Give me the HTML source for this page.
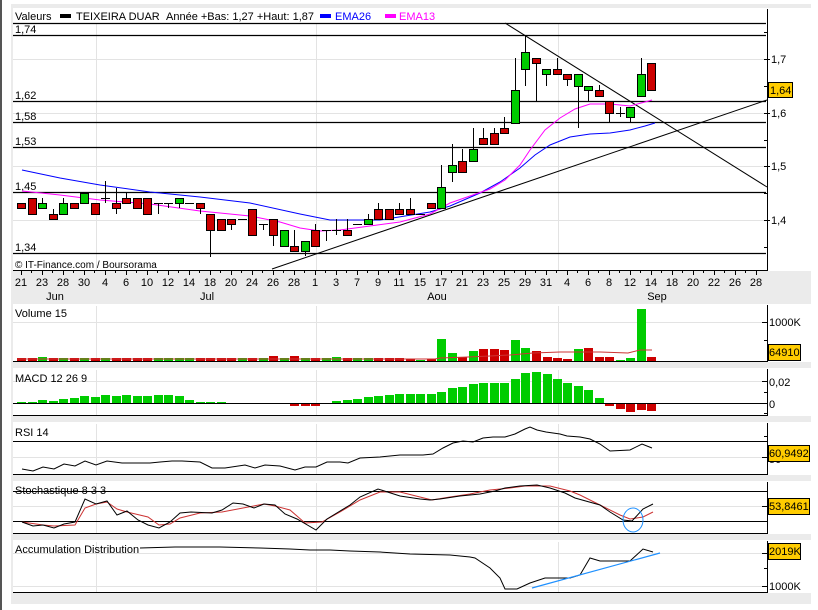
<!DOCTYPE html>
<html><head><meta charset="utf-8"><style>
html,body{margin:0;padding:0;background:#fff;width:818px;height:610px;overflow:hidden}
svg{display:block}
text{font-family:"Liberation Sans",sans-serif;font-size:11px;fill:#000}
</style></head><body>
<svg width="818" height="610" xmlns="http://www.w3.org/2000/svg">
<rect x="0" y="0" width="2" height="610" fill="#555"/>
<rect x="11" y="4" width="800" height="600" fill="#ebebeb"/>
<!-- panels white -->
<rect x="13" y="8" width="798" height="263" fill="#fff"/>
<rect x="13" y="304" width="798" height="58" fill="#fff"/>
<rect x="13" y="368" width="798" height="48" fill="#fff"/>
<rect x="13" y="422" width="798" height="53" fill="#fff"/>
<rect x="13" y="481" width="798" height="53" fill="#fff"/>
<rect x="13" y="540" width="798" height="53" fill="#fff"/>
<!-- light grid -->
<g stroke="#e3e3e3" stroke-width="1">
<line x1="13" y1="59.5" x2="767" y2="59.5"/><line x1="13" y1="113.5" x2="767" y2="113.5"/>
<line x1="13" y1="166.5" x2="767" y2="166.5"/><line x1="13" y1="220.5" x2="767" y2="220.5"/>
<line x1="13" y1="322.5" x2="767" y2="322.5"/><line x1="13" y1="381.5" x2="767" y2="381.5"/>
<line x1="13" y1="457.5" x2="767" y2="457.5"/><line x1="13" y1="506.5" x2="767" y2="506.5"/>
<line x1="13" y1="553.5" x2="767" y2="553.5"/><line x1="13" y1="586.5" x2="767" y2="586.5"/>
<path d="M96.5 24V271M316.5 24V271M558.5 24V271M96.5 306V362M316.5 306V362M558.5 306V362M96.5 370V416M316.5 370V416M558.5 370V416M96.5 424V475M316.5 424V475M558.5 424V475M96.5 483V534M316.5 483V534M558.5 483V534M96.5 542V593M316.5 542V593M558.5 542V593"/>
</g>
<!-- title -->
<text x="15" y="20">Valeurs</text>
<rect x="60" y="14" width="11" height="4" fill="#000"/>
<text x="76" y="20">TEIXEIRA DUAR</text>
<text x="166" y="20">Année +Bas: 1,27 +Haut: 1,87</text>
<rect x="320" y="14" width="11" height="4" fill="#00f"/>
<text x="335" y="20" style="fill:#00f">EMA26</text>
<rect x="385" y="14" width="11" height="4" fill="#f0f"/>
<text x="399" y="20" style="fill:#f0f">EMA13</text>
<!-- horizontal levels -->
<g stroke="#000" stroke-width="1.2">
<line x1="13" y1="23.5" x2="766" y2="23.5"/>
<line x1="13" y1="35.5" x2="766" y2="35.5"/>
<line x1="13" y1="101.5" x2="766" y2="101.5"/>
<line x1="13" y1="122.5" x2="766" y2="122.5"/>
<line x1="13" y1="147.5" x2="766" y2="147.5"/>
<line x1="13" y1="192.5" x2="766" y2="192.5"/>
<line x1="13" y1="253.5" x2="766" y2="253.5"/>
</g>
<text x="15" y="33">1,74</text><text x="15" y="99">1,62</text><text x="15" y="120">1,58</text>
<text x="15" y="145">1,53</text><text x="15" y="190">1,45</text><text x="15" y="251">1,34</text>
<text x="15" y="268" style="font-size:10px">© IT-Finance.com / Boursorama</text>
<!-- trend lines -->
<line x1="505" y1="23" x2="767" y2="187" stroke="#000" stroke-width="1"/>
<line x1="272" y1="269" x2="767" y2="100" stroke="#000" stroke-width="1"/>
<!-- EMAs -->
<polyline fill="none" stroke="#00f" stroke-width="1" points="22,170 60,178 100,185 150,192 200,197 250,203 300,214 330,220 380,220 430,212 450,206 480,193 500,182 520,168 535,155 550,145 570,137 590,134 610,133 630,130 645,126 655,123"/>
<polyline fill="none" stroke="#f0f" stroke-width="1" points="22,191 60,195 100,200 150,204 200,211 230,214 250,216 280,222 300,228 320,231 340,230 370,226 400,222 430,214 450,203 470,196 490,189 505,180 520,165 530,150 545,130 560,118 575,109 590,104 610,104 630,106 645,102 652,100"/>
<!-- candles -->
<g stroke="#000" stroke-width="1">
<path d="M42.5 198V208M53.5 209V219M63.5 198V214M105.5 181V203M116.5 188V214M126.5 193V203M158.5 203V214M168.5 203V208M179.5 198V208M200.5 203V214M210.5 214V257M231.5 219V230M263.5 224V230M273.5 219V246M294.5 230V251M305.5 241V256M315.5 224V246M326.5 230V241M336.5 219V235M347.5 219V235M368.5 214V224M378.5 203V219M399.5 203V214M410.5 198V214M441.5 165V208M452.5 144V182M462.5 149V172M473.5 128V161M483.5 128V144M494.5 128V144M504.5 117V133M515.5 58V123M525.5 36V86M536.5 58V101M546.5 69V86M557.5 58V74M567.5 74V86M578.5 74V128M588.5 86V101M599.5 85V96M609.5 101V123M620.5 107V117M630.5 107V123M641.5 58V96"/>
<path d="M101 198.5H110M154 203.5H163M164 203.5H173M185 203.5H194M238 219.5H247M259 224.5H268M322 230.5H331M332 230.5H341M353 224.5H362M416 214.5H425M616 113.5H625"/>
</g>
<g stroke="#000" stroke-width="1" fill="#cc0000">
<rect x="17.5" y="203.5" width="8" height="5"/><rect x="28.5" y="198.5" width="8" height="16"/>
<rect x="49.5" y="214.5" width="8" height="5"/><rect x="70.5" y="203.5" width="8" height="5"/>
<rect x="91.5" y="203.5" width="8" height="11"/><rect x="112.5" y="203.5" width="8" height="5"/>
<rect x="122.5" y="198.5" width="8" height="5"/><rect x="133.5" y="198.5" width="8" height="10"/>
<rect x="143.5" y="198.5" width="8" height="16"/><rect x="196.5" y="203.5" width="8" height="5"/>
<rect x="206.5" y="214.5" width="8" height="16"/><rect x="217.5" y="219.5" width="8" height="11"/>
<rect x="227.5" y="219.5" width="8" height="5"/><rect x="248.5" y="209.5" width="8" height="26"/>
<rect x="269.5" y="219.5" width="8" height="16"/><rect x="290.5" y="246.5" width="8" height="5"/>
<rect x="311.5" y="230.5" width="8" height="16"/><rect x="343.5" y="230.5" width="8" height="5"/>
<rect x="374.5" y="209.5" width="8" height="10"/><rect x="385.5" y="209.5" width="8" height="10"/>
<rect x="395.5" y="209.5" width="8" height="5"/><rect x="406.5" y="209.5" width="8" height="5"/>
<rect x="427.5" y="203.5" width="8" height="5"/><rect x="458.5" y="161.5" width="8" height="11"/>
<rect x="479.5" y="138.5" width="8" height="6"/><rect x="490.5" y="133.5" width="8" height="11"/>
<rect x="500.5" y="128.5" width="8" height="5"/><rect x="532.5" y="58.5" width="8" height="5"/>
<rect x="553.5" y="69.5" width="8" height="5"/><rect x="563.5" y="74.5" width="8" height="5"/>
<rect x="595.5" y="90.5" width="8" height="6"/><rect x="605.5" y="101.5" width="8" height="12"/>
<rect x="647.5" y="63.5" width="8" height="27"/>
</g>
<g stroke="#000" stroke-width="1" fill="#00cc00">
<rect x="38.5" y="203.5" width="8" height="5"/><rect x="59.5" y="203.5" width="8" height="11"/>
<rect x="80.5" y="193.5" width="8" height="10"/><rect x="175.5" y="198.5" width="8" height="5"/>
<rect x="280.5" y="230.5" width="8" height="16"/><rect x="301.5" y="241.5" width="8" height="10"/>
<rect x="364.5" y="219.5" width="8" height="5"/><rect x="437.5" y="187.5" width="8" height="21"/>
<rect x="448.5" y="165.5" width="8" height="7"/><rect x="469.5" y="149.5" width="8" height="12"/>
<rect x="511.5" y="90.5" width="8" height="33"/><rect x="521.5" y="52.5" width="8" height="17"/>
<rect x="542.5" y="69.5" width="8" height="5"/><rect x="574.5" y="74.5" width="8" height="12"/>
<rect x="584.5" y="86.5" width="8" height="4"/><rect x="626.5" y="107.5" width="8" height="10"/>
<rect x="637.5" y="74.5" width="8" height="22"/>
</g>
<!-- main axis -->
<line x1="767.5" y1="9" x2="767.5" y2="271" stroke="#000"/>
<line x1="13" y1="270.5" x2="767" y2="270.5" stroke="#000"/>
<g stroke="#000"><path d="M764 32.5H768M764 59.5H770M764 86.5H768M764 113.5H770M764 140.5H768M764 166.5H770M764 193.5H768M764 220.5H770M764 247.5H768"/></g>
<text x="771" y="63">1,7</text><text x="771" y="117">1,6</text><text x="771" y="170">1,5</text><text x="771" y="224">1,4</text>
<rect x="768.5" y="82.5" width="24" height="15" fill="#ffcc00" stroke="#000"/>
<text x="770" y="94">1,64</text>
<!-- date axis -->
<path stroke="#000" d="M21.5 271V275M31.5 271V273M42.5 271V275M52.5 271V273M63.5 271V275M73.5 271V273M84.5 271V275M94.5 271V273M105.5 271V275M115.5 271V273M126.5 271V275M136.5 271V273M147.5 271V275M157.5 271V273M168.5 271V275M178.5 271V273M189.5 271V275M199.5 271V273M210.5 271V275M220.5 271V273M231.5 271V275M241.5 271V273M252.5 271V275M262.5 271V273M273.5 271V275M283.5 271V273M294.5 271V275M304.5 271V273M315.5 271V275M325.5 271V273M336.5 271V275M346.5 271V273M357.5 271V275M367.5 271V273M378.5 271V275M388.5 271V273M399.5 271V275M409.5 271V273M420.5 271V275M430.5 271V273M441.5 271V275M451.5 271V273M462.5 271V275M472.5 271V273M483.5 271V275M493.5 271V273M504.5 271V275M514.5 271V273M525.5 271V275M535.5 271V273M546.5 271V275M556.5 271V273M567.5 271V275M577.5 271V273M588.5 271V275M598.5 271V273M609.5 271V275M619.5 271V273M630.5 271V275M640.5 271V273M651.5 271V275M661.5 271V273M672.5 271V275M682.5 271V273M693.5 271V275M703.5 271V273M714.5 271V275M724.5 271V273M735.5 271V275M745.5 271V273M756.5 271V275"/>
<g text-anchor="middle">
<text x="21" y="286">21</text><text x="42" y="286">23</text><text x="63" y="286">28</text><text x="84" y="286">30</text>
<text x="105" y="286">4</text><text x="126" y="286">6</text><text x="147" y="286">10</text><text x="168" y="286">12</text>
<text x="189" y="286">14</text><text x="210" y="286">18</text><text x="231" y="286">20</text><text x="252" y="286">24</text>
<text x="273" y="286">26</text><text x="294" y="286">28</text><text x="315" y="286">1</text><text x="336" y="286">3</text>
<text x="357" y="286">7</text><text x="378" y="286">9</text><text x="399" y="286">11</text><text x="420" y="286">15</text>
<text x="441" y="286">17</text><text x="462" y="286">21</text><text x="483" y="286">23</text><text x="504" y="286">25</text>
<text x="525" y="286">29</text><text x="546" y="286">31</text><text x="567" y="286">4</text><text x="588" y="286">6</text>
<text x="609" y="286">8</text><text x="630" y="286">12</text><text x="651" y="286">14</text><text x="672" y="286">18</text>
<text x="693" y="286">20</text><text x="714" y="286">22</text><text x="735" y="286">26</text><text x="756" y="286">28</text>
<text x="55" y="300">Jun</text><text x="207" y="300">Jul</text><text x="437" y="300">Aou</text><text x="657" y="300">Sep</text>
</g>
<!-- VOLUME -->
<text x="15" y="317">Volume 15</text>
<g fill="#cc0000">
<rect x="17" y="358" width="9" height="4"/><rect x="28" y="358" width="9" height="4"/><rect x="49" y="358" width="9" height="4"/><rect x="70" y="358" width="9" height="4"/><rect x="91" y="358" width="9" height="4"/><rect x="112" y="358" width="9" height="4"/><rect x="122" y="358" width="9" height="4"/><rect x="133" y="358" width="9" height="4"/><rect x="143" y="358" width="9" height="4"/><rect x="196" y="358" width="9" height="4"/><rect x="206" y="358" width="9" height="4"/><rect x="217" y="358" width="9" height="4"/><rect x="227" y="358" width="9" height="4"/><rect x="248" y="358" width="9" height="4"/><rect x="269" y="356" width="9" height="6"/><rect x="290" y="356" width="9" height="6"/><rect x="311" y="358" width="9" height="4"/><rect x="343" y="358" width="9" height="4"/><rect x="374" y="358" width="9" height="4"/><rect x="385" y="358" width="9" height="4"/><rect x="395" y="358" width="9" height="4"/><rect x="406" y="359" width="9" height="3"/><rect x="427" y="359" width="9" height="3"/><rect x="458" y="357" width="9" height="5"/><rect x="479" y="349" width="9" height="13"/><rect x="490" y="349" width="9" height="13"/><rect x="500" y="350" width="9" height="12"/><rect x="532" y="351" width="9" height="11"/><rect x="543" y="357" width="9" height="5"/><rect x="553" y="358" width="9" height="4"/><rect x="563" y="359" width="9" height="3"/><rect x="584" y="348" width="9" height="14"/><rect x="595" y="357" width="9" height="5"/><rect x="605" y="357" width="9" height="5"/><rect x="647" y="357" width="9" height="5"/>
</g>
<g fill="#00cc00">
<rect x="38" y="357" width="9" height="5"/><rect x="59" y="358" width="9" height="4"/><rect x="80" y="358" width="9" height="4"/><rect x="101" y="358" width="9" height="4"/><rect x="154" y="358" width="9" height="4"/><rect x="164" y="358" width="9" height="4"/><rect x="175" y="358" width="9" height="4"/><rect x="185" y="358" width="9" height="4"/><rect x="238" y="358" width="9" height="4"/><rect x="259" y="358" width="9" height="4"/><rect x="280" y="358" width="9" height="4"/><rect x="301" y="358" width="9" height="4"/><rect x="322" y="358" width="9" height="4"/><rect x="332" y="357" width="9" height="5"/><rect x="353" y="358" width="9" height="4"/><rect x="364" y="358" width="9" height="4"/><rect x="416" y="360" width="9" height="2"/><rect x="437" y="339" width="9" height="23"/><rect x="448" y="353" width="9" height="9"/><rect x="469" y="351" width="9" height="11"/><rect x="511" y="340" width="9" height="22"/><rect x="521" y="348" width="9" height="14"/><rect x="574" y="349" width="9" height="13"/><rect x="616" y="360" width="9" height="2"/><rect x="626" y="358" width="9" height="4"/><rect x="637" y="309" width="9" height="53"/>
</g>
<polyline fill="none" stroke="#cc3333" stroke-width="1" points="17,359 435,359 440,358 468,357 490,356 510,355 533,353 560,352 600,352 628,353 640,350 652,350"/>
<line x1="13" y1="361.5" x2="767" y2="361.5" stroke="#000"/>
<line x1="767.5" y1="305" x2="767.5" y2="362" stroke="#000"/>
<path stroke="#000" d="M762 322.5H767M764 340.5H767"/>
<text x="769" y="326">1000K</text>
<rect x="768.5" y="344.5" width="32" height="16" fill="#ffcc00" stroke="#000"/>
<text x="769" y="356">64910</text>
<!-- MACD -->
<text x="15" y="382">MACD 12 26 9</text>
<g fill="#00cc00">
<rect x="17" y="402" width="9" height="1"/><rect x="28" y="402" width="9" height="1"/><rect x="38" y="400" width="9" height="3"/><rect x="49" y="401" width="9" height="2"/><rect x="59" y="399" width="9" height="4"/><rect x="70" y="398" width="9" height="5"/><rect x="80" y="396" width="9" height="7"/><rect x="91" y="397" width="9" height="6"/><rect x="101" y="395" width="9" height="8"/><rect x="112" y="396" width="9" height="7"/><rect x="122" y="395" width="9" height="8"/><rect x="133" y="396" width="9" height="7"/><rect x="143" y="396" width="9" height="7"/><rect x="154" y="395" width="9" height="8"/><rect x="164" y="395" width="9" height="8"/><rect x="175" y="396" width="9" height="7"/><rect x="185" y="400" width="9" height="3"/><rect x="196" y="402" width="9" height="1"/><rect x="206" y="402" width="9" height="1"/><rect x="217" y="402" width="9" height="1"/><rect x="332" y="401" width="9" height="2"/><rect x="343" y="400" width="9" height="3"/><rect x="353" y="399" width="9" height="4"/><rect x="364" y="397" width="9" height="6"/><rect x="374" y="396" width="9" height="7"/><rect x="385" y="395" width="9" height="8"/><rect x="395" y="394" width="9" height="9"/><rect x="406" y="394" width="9" height="9"/><rect x="416" y="394" width="9" height="9"/><rect x="427" y="394" width="9" height="9"/><rect x="437" y="392" width="9" height="11"/><rect x="448" y="388" width="9" height="15"/><rect x="458" y="387" width="9" height="16"/><rect x="469" y="384" width="9" height="19"/><rect x="479" y="383" width="9" height="20"/><rect x="490" y="383" width="9" height="20"/><rect x="500" y="383" width="9" height="20"/><rect x="511" y="379" width="9" height="24"/><rect x="521" y="373" width="9" height="30"/><rect x="532" y="372" width="9" height="31"/><rect x="543" y="374" width="9" height="29"/><rect x="553" y="379" width="9" height="24"/><rect x="563" y="383" width="9" height="20"/><rect x="574" y="386" width="9" height="17"/><rect x="584" y="390" width="9" height="13"/><rect x="595" y="398" width="9" height="5"/>
</g>
<g fill="#cc0000">
<rect x="290" y="403" width="9" height="3"/><rect x="301" y="403" width="9" height="3"/><rect x="311" y="403" width="9" height="3"/><rect x="605" y="403" width="9" height="3"/><rect x="616" y="403" width="9" height="6"/><rect x="626" y="403" width="9" height="9"/><rect x="637" y="403" width="9" height="7"/><rect x="647" y="403" width="9" height="8"/>
</g>
<line x1="13" y1="403.5" x2="767" y2="403.5" stroke="#000"/>
<line x1="13" y1="415.5" x2="767" y2="415.5" stroke="#000"/>
<line x1="767.5" y1="369" x2="767.5" y2="416" stroke="#000"/>
<path stroke="#000" d="M762 381.5H767M764 392.5H767M762 403.5H767M764 413.5H767"/>
<text x="769" y="386">0,02</text><text x="769" y="408">0</text>
<!-- RSI -->
<text x="15" y="436">RSI 14</text>
<line x1="13" y1="441.5" x2="767" y2="441.5" stroke="#000"/>
<polyline fill="none" stroke="#000" stroke-width="1" points="22,469 33,471 43,467 54,469 64,464 75,466 85,461 96,465 107,461 122,463 150,463 160,462 172,461 182,461 200,462 212,468 225,468 245,465 255,468 265,465 280,466 295,470 305,467 316,467 327,462 340,462 348,463 360,458 380,457 400,455 423,455 433,454 443,448 453,443 463,441 473,442 483,438 493,437 505,437 515,434 525,429 530,427 537,430 546,432 560,434 567,436 580,437 590,439 600,444 610,451 630,450 642,444 652,448"/>
<line x1="13" y1="474.5" x2="767" y2="474.5" stroke="#000"/>
<line x1="767.5" y1="423" x2="767.5" y2="475" stroke="#000"/>
<path stroke="#000" d="M764 436.5H767M762 457.5H767"/>
<text x="769" y="463">50</text>
<rect x="768.5" y="445.5" width="41" height="16" fill="#ffcc00" stroke="#000"/>
<text x="769" y="457">60,9492</text>
<!-- STOCH -->
<line x1="13" y1="491.5" x2="767" y2="491.5" stroke="#000"/>
<line x1="13" y1="521.5" x2="767" y2="521.5" stroke="#000"/>
<text x="15" y="494">Stochastique 8 3 3</text>
<polyline fill="none" stroke="#cc3333" stroke-width="1" points="22,522 43,525 54,526 75,525 85,508 96,504 107,502 117,509 127,512 148,517 159,525 170,524 180,518 200,513 222,512 243,508 264,504 275,506 290,510 305,523 322,522 340,512 360,500 380,492 400,492 420,497 432,500 450,497 470,494 490,490 510,488 525,486 550,486 570,491 580,495 600,505 620,515 630,519 643,517 653,512"/>
<polyline fill="none" stroke="#000" stroke-width="1" points="22,522 33,526 43,525 54,528 64,524 75,522 85,499 96,504 107,501 117,515 127,511 138,520 148,525 159,528 170,522 180,513 191,512 212,513 222,510 233,503 243,504 254,508 264,504 275,505 285,514 297,519 316,530 327,519 350,505 360,497 378,489 400,496 420,499 430,500 440,499 460,496 480,494 495,491 505,488 520,486 537,485 550,488 565,493 575,498 600,505 610,512 623,520 632,521 643,509 653,504"/>
<ellipse cx="633" cy="520" rx="10" ry="12" fill="none" stroke="#1e90ff" stroke-width="1"/>
<line x1="13" y1="533.5" x2="767" y2="533.5" stroke="#000"/>
<line x1="767.5" y1="482" x2="767.5" y2="534" stroke="#000"/>
<path stroke="#000" d="M762 506.5H767"/>
<rect x="768.5" y="498.5" width="41" height="16" fill="#ffcc00" stroke="#000"/>
<text x="769" y="510">53,8461</text>
<!-- ACCUM -->
<text x="15" y="553">Accumulation Distribution</text>
<polyline fill="none" stroke="#000" stroke-width="1" points="140,548 175,547 220,547 260,548 290,549 310,550 330,550 350,551 380,552 410,554 450,555 470,557 475,558 490,568 500,578 505,589 517,589 530,583 545,578 570,578 580,575 590,558 600,561 630,561 643,549 653,552"/>
<line x1="532" y1="588" x2="660" y2="553" stroke="#1e90ff" stroke-width="1.2"/>
<line x1="13" y1="592.5" x2="767" y2="592.5" stroke="#000"/>
<line x1="767.5" y1="541" x2="767.5" y2="593" stroke="#000"/>
<path stroke="#000" d="M762 553.5H767M764 568.5H767M762 586.5H767"/>
<rect x="768.5" y="543.5" width="32" height="16" fill="#ffcc00" stroke="#000"/>
<text x="769" y="555">2019K</text>
<text x="769" y="590">1000K</text>
</svg>
</body></html>
